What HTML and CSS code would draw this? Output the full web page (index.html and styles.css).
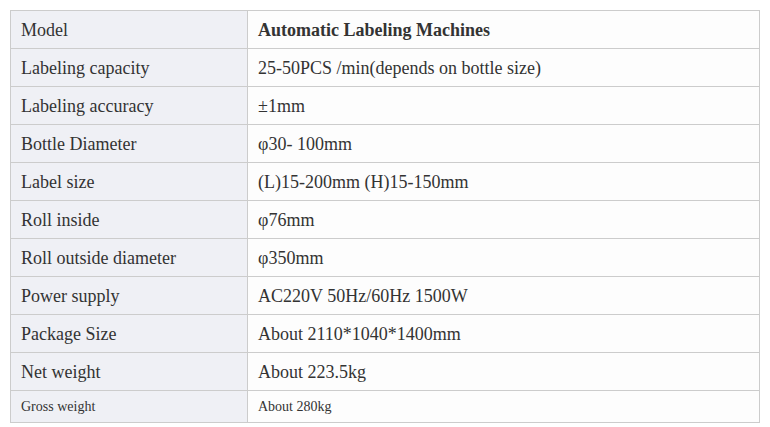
FILE: index.html
```html
<!DOCTYPE html>
<html>
<head>
<meta charset="utf-8">
<link rel="stylesheet" href="styles.css">
</head>
<body>
<table class="spec">
  <colgroup><col class="c1"><col class="c2"></colgroup>
  <tr><td class="k">Model</td><td class="v"><strong>Automatic Labeling Machines</strong></td></tr>
  <tr><td class="k">Labeling capacity</td><td class="v">25-50PCS /min(depends on bottle size)</td></tr>
  <tr><td class="k">Labeling accuracy</td><td class="v">±1mm</td></tr>
  <tr><td class="k">Bottle Diameter</td><td class="v">φ30- 100mm</td></tr>
  <tr><td class="k">Label size</td><td class="v">(L)15-200mm (H)15-150mm</td></tr>
  <tr><td class="k">Roll inside</td><td class="v">φ76mm</td></tr>
  <tr><td class="k">Roll outside diameter</td><td class="v">φ350mm</td></tr>
  <tr><td class="k">Power supply</td><td class="v">AC220V 50Hz/60Hz 1500W</td></tr>
  <tr><td class="k">Package Size</td><td class="v">About 2110*1040*1400mm</td></tr>
  <tr><td class="k">Net weight</td><td class="v">About 223.5kg</td></tr>
  <tr class="small"><td class="k">Gross weight</td><td class="v">About 280kg</td></tr>
</table>
</body>
</html>
```
FILE: styles.css
```css
body {
  margin: 10px;
  background: #fff;
  font-family: "Liberation Serif", "Times New Roman", serif;
  color: #333;
}
.spec {
  border-collapse: collapse;
  width: 750px;
  table-layout: fixed;
}
.c1 { width: 237px; }
.spec td {
  border: 1px solid #ccc;
  height: 38px;
  padding: 0 10px;
  font-size: 18px;
  line-height: 22px;
  box-sizing: border-box;
  vertical-align: middle;
}
.spec td.k { background: #eff0f5; }
.spec td.v { background: #fdfdfd; }
.spec strong { font-weight: bold; }
.spec tr.small td {
  height: 32px;
  font-size: 14px;
}
```
